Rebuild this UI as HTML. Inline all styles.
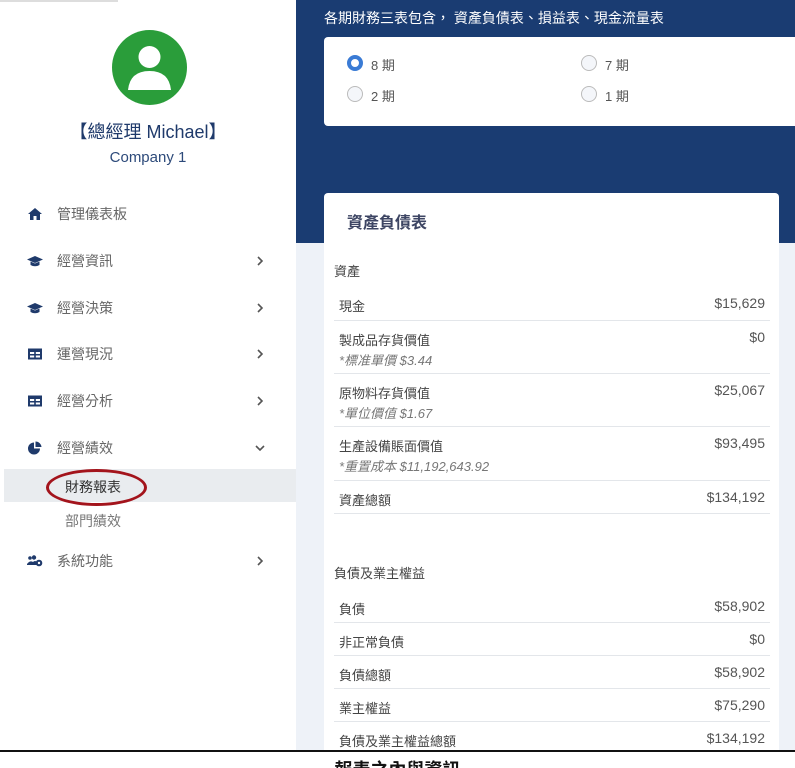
<!DOCTYPE html>
<html><head><meta charset="utf-8"><style>
*{margin:0;padding:0;box-sizing:border-box}
html,body{width:795px;height:768px;overflow:hidden}
body{background:#fff;font-family:"Liberation Sans","Noto Sans CJK TC",sans-serif;position:relative;color:#444}
.abs{position:absolute}
.side{left:0;top:0;width:296px;height:750px;background:#fff}
.topbar{left:0;top:0;width:118px;height:2px;background:#ddd}
.avatar{left:112px;top:30px;width:75px;height:75px;border-radius:50%;background:#2a9d3a;overflow:hidden}
.nm{left:0;width:296px;text-align:center;color:#1f3a6b}
.mi{left:0;width:296px;height:46px;font-size:14px;color:#666}
.mi .ic{position:absolute;left:27px;top:50%;transform:translateY(-50%);width:16px;height:14px}
.mi .t{position:absolute;left:57px;top:50%;transform:translateY(-50%)}
.mi .ch{position:absolute;left:255px;top:50%;transform:translateY(-50%);width:10px;height:10px}
.main{left:296px;top:0;width:499px;height:750px;background:#eef2f8}
.blue{left:296px;top:0;width:499px;height:243px;background:#1a3c72}
.card{background:#fff;border-radius:4px}
.radio{width:16px;height:16px;border-radius:50%;border:1px solid #bbb;background:#f4f6fa}
.radio.on{border:4px solid #3a7bd5;background:#fff}
.rl{font-size:13px;color:#555}
.row{left:334px;width:436px;border-bottom:1px solid #e3e6ea;font-size:13px;color:#444}
.row .l{position:absolute;left:5px;top:9px}
.row .r{position:absolute;right:5px;top:8px;font-size:14px;color:#555}
.row .s{position:absolute;left:5px;top:29px;font-style:italic;color:#777}
</style></head><body>
<div class="abs side"></div>
<div class="abs topbar"></div>
<div class="abs avatar"><svg width="75" height="75" viewBox="0 0 75 75"><circle cx="37.5" cy="27" r="11" fill="#fff"/><path d="M16 60 Q18 41 37.5 41 Q57 41 59 60 Z" fill="#fff"/></svg></div>
<div class="abs nm" style="top:118px;font-size:18px">【總經理 Michael】</div>
<div class="abs nm" style="top:149px;font-size:15px;color:#2d4a7a">Company 1</div>

<div class="abs mi" style="top:191px"><svg class="ic" viewBox="0 0 16 14"><path d="M8 1 L1 7 H3 V13 H6.5 V9 H9.5 V13 H13 V7 H15 Z" fill="#1f3a6b"/></svg><span class="t">管理儀表板</span></div>
<div class="abs mi" style="top:238px"><svg class="ic" viewBox="0 0 16 14"><path d="M8 2 L0 5.5 L8 9 L16 5.5Z M3.5 7.5 V11 Q8 13.5 12.5 11 V7.5 L8 9.5Z" fill="#1f3a6b"/></svg><span class="t">經營資訊</span><svg class="ch" viewBox="0 0 10 10"><path d="M3 1 L7 5 L3 9" stroke="#555" stroke-width="1.6" fill="none"/></svg></div>
<div class="abs mi" style="top:285px"><svg class="ic" viewBox="0 0 16 14"><path d="M8 2 L0 5.5 L8 9 L16 5.5Z M3.5 7.5 V11 Q8 13.5 12.5 11 V7.5 L8 9.5Z" fill="#1f3a6b"/></svg><span class="t">經營決策</span><svg class="ch" viewBox="0 0 10 10"><path d="M3 1 L7 5 L3 9" stroke="#555" stroke-width="1.6" fill="none"/></svg></div>
<div class="abs mi" style="top:331px"><svg class="ic" viewBox="0 0 16 14"><path d="M1 1.5H15V12.5H1Z" fill="#1f3a6b"/><path d="M3 5H7.2V7H3ZM8.8 5H13V7H8.8ZM3 8.5H7.2V10.5H3ZM8.8 8.5H13V10.5H8.8Z" fill="#fff"/></svg><span class="t">運營現況</span><svg class="ch" viewBox="0 0 10 10"><path d="M3 1 L7 5 L3 9" stroke="#555" stroke-width="1.6" fill="none"/></svg></div>
<div class="abs mi" style="top:378px"><svg class="ic" viewBox="0 0 16 14"><path d="M1 1.5H15V12.5H1Z" fill="#1f3a6b"/><path d="M3 5H7.2V7H3ZM8.8 5H13V7H8.8ZM3 8.5H7.2V10.5H3ZM8.8 8.5H13V10.5H8.8Z" fill="#fff"/></svg><span class="t">經營分析</span><svg class="ch" viewBox="0 0 10 10"><path d="M3 1 L7 5 L3 9" stroke="#555" stroke-width="1.6" fill="none"/></svg></div>
<div class="abs mi" style="top:425px"><svg class="ic" viewBox="0 0 16 14"><path d="M7 1.5 A6 6 0 1 0 13 7.5 H7Z" fill="#1f3a6b"/><path d="M8.5 0.5 A6 6 0 0 1 14.5 6 H8.5Z" fill="#1f3a6b"/></svg><span class="t">經營績效</span><svg class="ch" viewBox="0 0 10 10"><path d="M1 3 L5 7 L9 3" stroke="#555" stroke-width="1.6" fill="none"/></svg></div>
<div class="abs" style="left:4px;top:469px;width:292px;height:33px;background:#e9ecef"></div>
<div class="abs" style="left:65px;top:477px;font-size:14px;color:#333">財務報表</div>
<div class="abs" style="left:46px;top:469px;width:101px;height:37px;border:3px solid #a3141c;border-radius:50%"></div>
<div class="abs" style="left:65px;top:511px;font-size:14px;color:#777">部門績效</div>
<div class="abs mi" style="top:538px"><svg class="ic" viewBox="0 0 16 14"><circle cx="3" cy="4" r="1.8" fill="#1f3a6b"/><circle cx="7" cy="3.5" r="2.2" fill="#1f3a6b"/><path d="M0 10 Q3 6 6 8 V11 H0Z M4 11 Q7 5 10 8 V11Z" fill="#1f3a6b"/><circle cx="12" cy="9" r="3.3" fill="#1f3a6b"/><circle cx="12" cy="9" r="1.2" fill="#fff"/></svg><span class="t">系統功能</span><svg class="ch" viewBox="0 0 10 10"><path d="M3 1 L7 5 L3 9" stroke="#555" stroke-width="1.6" fill="none"/></svg></div>

<div class="abs main"></div>
<div class="abs blue"></div>
<div class="abs" style="left:324px;top:8px;font-size:14px;color:#fff">各期財務三表包含， 資產負債表、損益表、現金流量表</div>
<div class="abs card" style="left:324px;top:37px;width:480px;height:89px"></div>
<div class="abs radio on" style="left:347px;top:55px"></div><div class="abs rl" style="left:371px;top:55px">8 期</div>
<div class="abs radio" style="left:581px;top:55px"></div><div class="abs rl" style="left:605px;top:55px">7 期</div>
<div class="abs radio" style="left:347px;top:86px"></div><div class="abs rl" style="left:371px;top:86px">2 期</div>
<div class="abs radio" style="left:581px;top:86px"></div><div class="abs rl" style="left:605px;top:86px">1 期</div>

<div class="abs card" style="left:324px;top:193px;width:455px;height:570px"></div>
<div class="abs" style="left:347px;top:209px;font-size:16px;font-weight:bold;color:#3d4563">資產負債表</div>
<div class="abs" style="left:334px;top:261px;font-size:13px;color:#444">資產</div>
<div class="abs row" style="top:287px;height:34px"><span class="l">現金</span><span class="r">$15,629</span></div>
<div class="abs row" style="top:321px;height:53px"><span class="l">製成品存貨價值</span><span class="r">$0</span><span class="s">*標准單價 $3.44</span></div>
<div class="abs row" style="top:374px;height:53px"><span class="l">原物料存貨價值</span><span class="r">$25,067</span><span class="s">*單位價值 $1.67</span></div>
<div class="abs row" style="top:427px;height:54px"><span class="l">生產設備賬面價值</span><span class="r">$93,495</span><span class="s">*重置成本 $11,192,643.92</span></div>
<div class="abs row" style="top:481px;height:33px"><span class="l">資產總額</span><span class="r">$134,192</span></div>
<div class="abs" style="left:334px;top:563px;font-size:13px;color:#444">負債及業主權益</div>
<div class="abs row" style="top:590px;height:33px"><span class="l">負債</span><span class="r">$58,902</span></div>
<div class="abs row" style="top:623px;height:33px"><span class="l">非正常負債</span><span class="r">$0</span></div>
<div class="abs row" style="top:656px;height:33px"><span class="l">負債總額</span><span class="r">$58,902</span></div>
<div class="abs row" style="top:689px;height:33px"><span class="l">業主權益</span><span class="r">$75,290</span></div>
<div class="abs row" style="top:722px;height:33px;border:none"><span class="l">負債及業主權益總額</span><span class="r">$134,192</span></div>

<div class="abs" style="left:0;top:750px;width:795px;height:18px;background:#fff;overflow:hidden">
<div style="position:absolute;left:0;top:0;width:795px;height:2px;background:#111"></div>
<div style="position:absolute;left:0;top:9px;width:795px;text-align:center;font-size:18px;font-weight:bold;color:#111;line-height:22px">報表之內與資訊</div>
</div>
</body></html>
